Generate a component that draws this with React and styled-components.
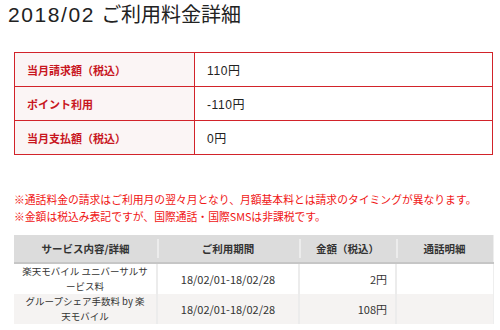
import React from "react";
import styled, { createGlobalStyle } from "styled-components";

const Global = createGlobalStyle`
  html, body { margin: 0; padding: 0; background: #fff; }
  body { font-family: "Liberation Sans", "Noto Sans CJK JP", sans-serif; color: #222; }
`;

const Page = styled.div`
  width: 500px;
  height: 330px;
  overflow: hidden;
  padding: 3px 7px 0 14px;
  box-sizing: border-box;
`;

const Title = styled.h1`
  margin: 0 0 0 -6px;
  font-size: 20px;
  line-height: 24px;
  font-weight: 400;
  color: #222;
  font-family: "Liberation Sans", "Noto Sans CJK JP", sans-serif;
`;

const Digits = styled.span`
  letter-spacing: 1.6px;
  font-size: 21px;
  margin-right: 6px;
`;

const SummaryTable = styled.table`
  margin-top: 25px;
  width: 479px;
  border-collapse: collapse;
  border: 1px solid #d2232a;
  font-family: "Noto Sans CJK JP", sans-serif;
  font-size: 11px;
`;

const SumRow = styled.tr`
  height: 34px;
`;

const SumLabel = styled.th`
  width: 167px;
  text-align: left;
  padding: 0 0 0 12px;
  background: #fbf5f5;
  color: #c8161e;
  font-weight: 700;
  border: 1px solid #d2232a;
`;

const SumValue = styled.td`
  padding: 0 0 0 12px;
  color: #222;
  font-family: "Liberation Sans", "Noto Sans CJK JP", sans-serif;
  font-size: 12px;
  letter-spacing: 0.6px;
  border: 1px solid #d2232a;
`;

const Notes = styled.div`
  margin-top: 36px;
  color: #f01414;
  font-family: "Noto Sans CJK JP", sans-serif;
  font-size: 10.8px;
  line-height: 17px;
`;

const DetailTable = styled.table`
  margin-top: 10px;
  width: 479px;
  table-layout: fixed;
  border-collapse: collapse;
  font-family: "Noto Sans CJK JP", sans-serif;
  font-size: 11px;
  color: #333;
  border-right: 1px solid #eee;
`;

const HeadCell = styled.th`
  position: relative;
  height: 27px;
  padding: 0;
  background: #dcdcdc;
  border-bottom: 2px solid #c6c6c6;
  font-weight: 700;
  font-size: 10.5px;
  color: #333;
  width: ${(p) => p.$w}px;
  &:not(:first-child)::before {
    content: "";
    position: absolute;
    left: 0;
    top: 4px;
    bottom: 4px;
    width: 2px;
    background: #ececec;
  }
`;

const BodyRow = styled.tr`
  background: ${(p) => (p.$alt ? "#f5f3f2" : "#fff")};
`;

const Cell = styled.td`
  height: 29px;
  padding: 0 ${(p) => (p.$align === "right" ? "8px" : "4px")} 0 4px;
  text-align: ${(p) => p.$align || "center"};
  line-height: 15px;
  border-left: 2px solid #ececec;
`;

const ServiceCell = styled.td`
  height: 29px;
  padding: 0 8px;
  text-align: center;
  font-size: 9.5px;
  line-height: 15px;
`;

const summary = [
  ["当月請求額（税込）", "110円"],
  ["ポイント利用", "-110円"],
  ["当月支払額（税込）", "0円"],
];

const rows = [
  ["楽天モバイル ユニバーサルサービス料", "18/02/01-18/02/28", "2円"],
  ["グループシェア手数料 by 楽天モバイル", "18/02/01-18/02/28", "108円"],
];

export default function App() {
  return (
    <Page>
      <Global />
      <Title>
        <Digits>2018/02</Digits>ご利用料金詳細
      </Title>
      <SummaryTable>
        <tbody>
          {summary.map(([l, v]) => (
            <SumRow key={l}>
              <SumLabel>{l}</SumLabel>
              <SumValue>{v}</SumValue>
            </SumRow>
          ))}
        </tbody>
      </SummaryTable>
      <Notes>
        <div>※通話料金の請求はご利用月の翌々月となり、月額基本料とは請求のタイミングが異なります。</div>
        <div>※金額は税込み表記ですが、国際通話・国際SMSは非課税です。</div>
      </Notes>
      <DetailTable>
        <thead>
          <tr>
            <HeadCell $w={143}>サービス内容/詳細</HeadCell>
            <HeadCell $w={142}>ご利用期間</HeadCell>
            <HeadCell $w={97}>金額（税込）</HeadCell>
            <HeadCell $w={97}>通話明細</HeadCell>
          </tr>
        </thead>
        <tbody>
          {rows.map(([s, p, a], i) => (
            <BodyRow key={s} $alt={i % 2 === 1}>
              <ServiceCell>{s}</ServiceCell>
              <Cell>{p}</Cell>
              <Cell $align="right">{a}</Cell>
              <Cell />
            </BodyRow>
          ))}
        </tbody>
      </DetailTable>
    </Page>
  );
}
